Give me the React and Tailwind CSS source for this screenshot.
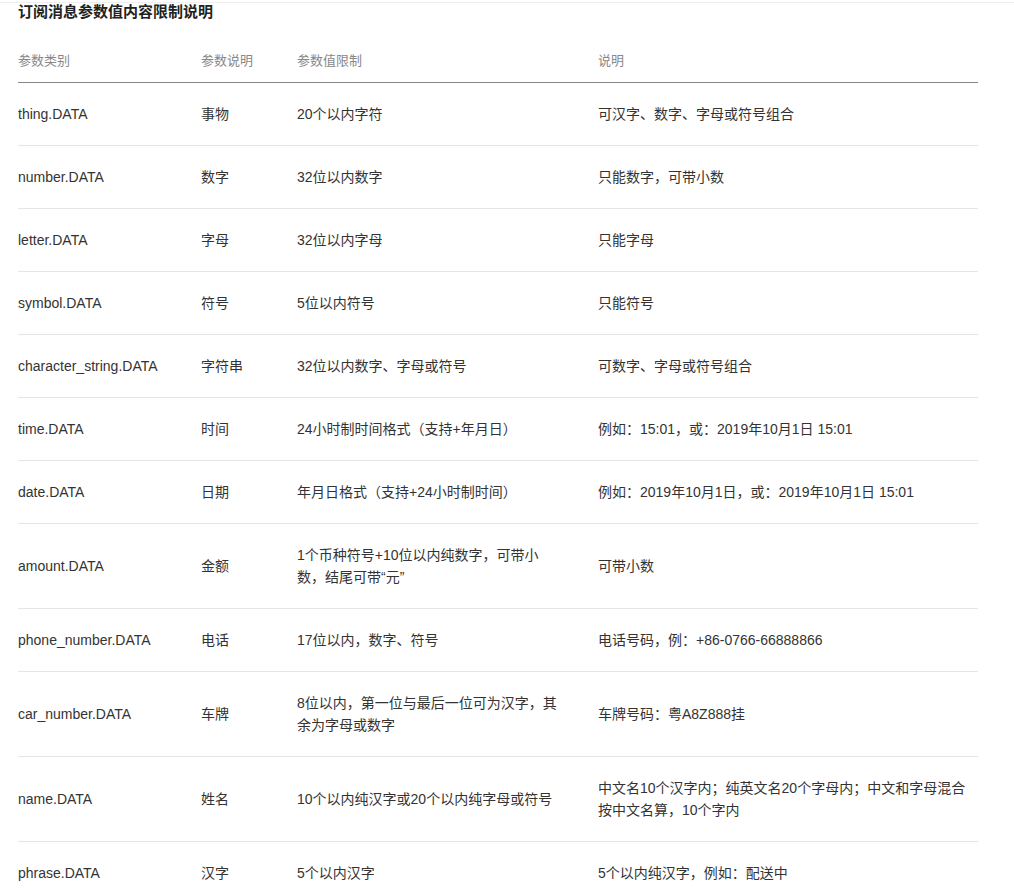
const rows = [
  ["thing.DATA", "事物", "20个以内字符", "可汉字、数字、字母或符号组合"],
  ["number.DATA", "数字", "32位以内数字", "只能数字，可带小数"],
  ["letter.DATA", "字母", "32位以内字母", "只能字母"],
  ["symbol.DATA", "符号", "5位以内符号", "只能符号"],
  ["character_string.DATA", "字符串", "32位以内数字、字母或符号", "可数字、字母或符号组合"],
  ["time.DATA", "时间", "24小时制时间格式（支持+年月日）", "例如：15:01，或：2019年10月1日 15:01"],
  ["date.DATA", "日期", "年月日格式（支持+24小时制时间）", "例如：2019年10月1日，或：2019年10月1日 15:01"],
  ["amount.DATA", "金额", "1个币种符号+10位以内纯数字，可带小数，结尾可带“元”", "可带小数"],
  ["phone_number.DATA", "电话", "17位以内，数字、符号", "电话号码，例：+86-0766-66888866"],
  ["car_number.DATA", "车牌", "8位以内，第一位与最后一位可为汉字，其余为字母或数字", "车牌号码：粤A8Z888挂"],
  ["name.DATA", "姓名", "10个以内纯汉字或20个以内纯字母或符号", "中文名10个汉字内；纯英文名20个字母内；中文和字母混合按中文名算，10个字内"],
  ["phrase.DATA", "汉字", "5个以内汉字", "5个以内纯汉字，例如：配送中"],
];

export default function App() {
  return (
    <div
      className="h-[890px] overflow-hidden bg-white text-[14px] text-[#333]"
      style={{ fontFamily: '"Liberation Sans", "Noto Sans CJK SC", sans-serif' }}
    >
      <div className="border-t border-[#eee] mt-[2px]" />
      <h2 className="pl-[18px] text-[15px] font-bold leading-[18px] text-[#222]">订阅消息参数值内容限制说明</h2>
      <table className="ml-[18px] mt-[30px] w-[960px] table-fixed border-collapse">
        <colgroup>
          <col className="w-[183px]" />
          <col className="w-[96px]" />
          <col className="w-[301px]" />
          <col className="w-[380px]" />
        </colgroup>
        <thead>
          <tr className="border-b border-[#888] text-left text-[13px] text-[#888]">
            <th className="pb-[11px] font-normal leading-[20px]">参数类别</th>
            <th className="pb-[11px] font-normal leading-[20px]">参数说明</th>
            <th className="pb-[11px] font-normal leading-[20px]">参数值限制</th>
            <th className="pb-[11px] font-normal leading-[20px]">说明</th>
          </tr>
        </thead>
        <tbody>
          {rows.map((r) => (
            <tr key={r[0]} className="border-b border-[#e5e5e5]">
              <td className="py-[20px] pr-4 align-middle leading-[22px]">{r[0]}</td>
              <td className="py-[20px] pr-4 align-middle leading-[22px]">{r[1]}</td>
              <td className="py-[20px] pr-[38px] align-middle leading-[22px]">{r[2]}</td>
              <td className="py-[20px] pr-[10px] align-middle leading-[22px]">{r[3]}</td>
            </tr>
          ))}
        </tbody>
      </table>
    </div>
  );
}
